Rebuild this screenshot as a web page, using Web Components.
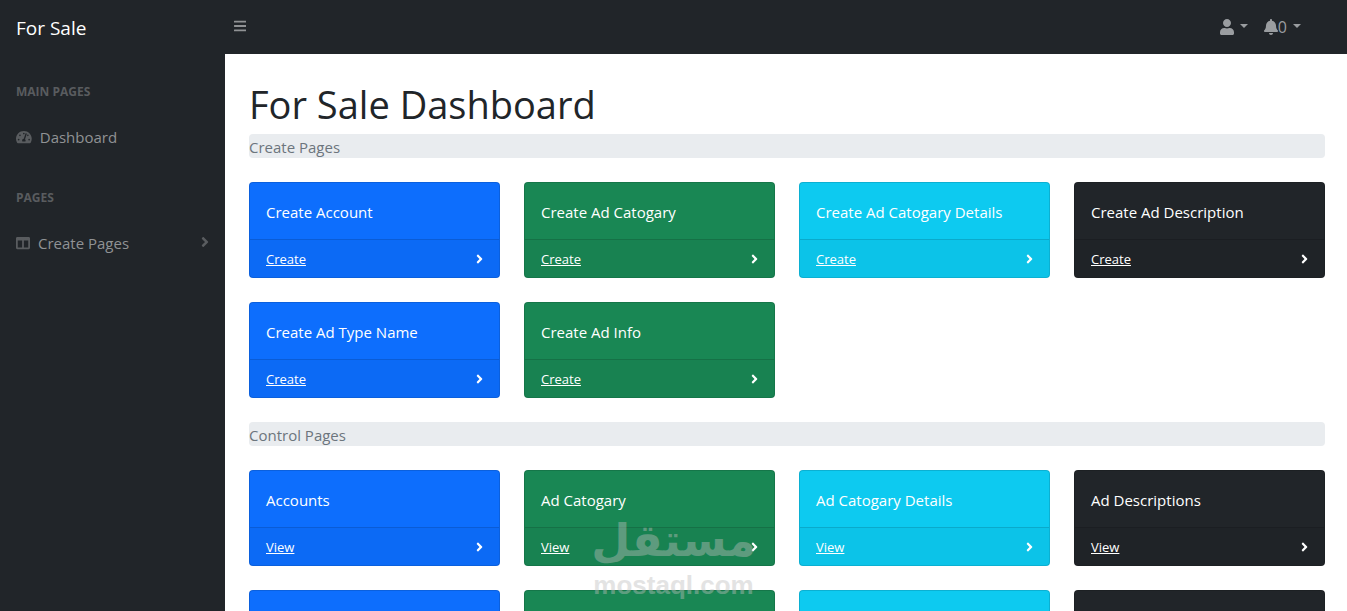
<!DOCTYPE html>
<html lang="en">
<head>
<meta charset="utf-8">
<meta name="viewport" content="width=device-width, initial-scale=1">
<title>For Sale Dashboard</title>
<style>
  body { margin: 0; font: 15px/24px "Open Sans", "Noto Sans", sans-serif; color: #212529; background: #fff; }
</style>
</head>
<body>
<sale-app>
  <top-bar slot="top" brand="For Sale" count="0"></top-bar>
  <side-nav slot="side">
    <nav-group heading="Main Pages"><nav-item icon="gauge">Dashboard</nav-item></nav-group>
    <nav-group heading="Pages"><nav-item icon="columns" expandable>Create Pages</nav-item></nav-group>
  </side-nav>
  <page-title>For Sale Dashboard</page-title>
  <card-section heading="Create Pages">
    <link-card tone="primary" action="Create">Create Account</link-card>
    <link-card tone="success" action="Create">Create Ad Catogary</link-card>
    <link-card tone="info" action="Create">Create Ad Catogary Details</link-card>
    <link-card tone="dark" action="Create">Create Ad Description</link-card>
    <link-card tone="primary" action="Create">Create Ad Type Name</link-card>
    <link-card tone="success" action="Create">Create Ad Info</link-card>
  </card-section>
  <card-section heading="Control Pages">
    <link-card tone="primary" action="View">Accounts</link-card>
    <link-card tone="success" action="View">Ad Catogary</link-card>
    <link-card tone="info" action="View">Ad Catogary Details</link-card>
    <link-card tone="dark" action="View">Ad Descriptions</link-card>
    <link-card tone="primary"></link-card>
    <link-card tone="success"></link-card>
    <link-card tone="info"></link-card>
    <link-card tone="dark"></link-card>
  </card-section>
  <water-mark slot="overlay"></water-mark>
</sale-app>

<script>
const ICONS = {
  bars: [448, "M16 132h416c8.837 0 16-7.163 16-16V76c0-8.837-7.163-16-16-16H16C7.163 60 0 67.163 0 76v40c0 8.837 7.163 16 16 16zm0 160h416c8.837 0 16-7.163 16-16v-40c0-8.837-7.163-16-16-16H16c-8.837 0-16 7.163-16 16v40c0 8.837 7.163 16 16 16zm0 160h416c8.837 0 16-7.163 16-16v-40c0-8.837-7.163-16-16-16H16c-8.837 0-16 7.163-16 16v40c0 8.837 7.163 16 16 16z"],
  user: [448, "M224 256c70.7 0 128-57.3 128-128S294.7 0 224 0 96 57.3 96 128s57.3 128 128 128zm89.6 32h-16.7c-22.2 10.2-46.9 16-72.9 16s-50.6-5.8-72.9-16h-16.7C60.2 288 0 348.2 0 422.4V464c0 26.5 21.5 48 48 48h352c26.5 0 48-21.5 48-48v-41.6c0-74.2-60.2-134.4-134.4-134.4z"],
  bell: [448, "M224 512c35.32 0 63.97-28.65 63.97-64H160.03c0 35.35 28.65 64 63.97 64zm215.39-149.71c-19.32-20.76-55.47-51.99-55.47-154.29 0-77.7-54.48-139.9-127.94-155.16V32c0-17.67-14.32-32-31.98-32s-31.98 14.33-31.98 32v20.84C118.56 68.1 64.08 130.3 64.08 208c0 102.3-36.15 133.53-55.47 154.29-6 6.45-8.66 14.16-8.61 21.71.11 16.4 12.98 32 32.1 32h383.8c19.12 0 32-15.6 32.1-32 .05-7.55-2.61-15.27-8.61-21.71z"],
  columns: [512, "M464 32H48C21.49 32 0 53.49 0 80v352c0 26.51 21.49 48 48 48h416c26.51 0 48-21.49 48-48V80c0-26.51-21.49-48-48-48zM224 416H64V160h160v256zm224 0H288V160h160v256z"],
  gauge: [576, "M288 32C128.94 32 0 160.94 0 320c0 52.8 14.25 102.26 39.06 144.8 5.61 9.62 16.3 15.2 27.44 15.2h443c11.14 0 21.83-5.58 27.44-15.2C561.75 422.26 576 372.8 576 320c0-159.06-128.94-288-288-288zm0 64c14.71 0 26.58 10.13 30.32 23.65-1.11 2.26-2.64 4.23-3.45 6.67l-9.22 27.67c-5.13 3.49-10.97 6.01-17.64 6.01-17.67 0-32-14.33-32-32S270.33 96 288 96zM96 384c-17.67 0-32-14.33-32-32s14.33-32 32-32 32 14.33 32 32-14.33 32-32 32zm48-160c-17.67 0-32-14.33-32-32s14.33-32 32-32 32 14.33 32 32-14.33 32-32 32zm246.77-72.41l-61.33 184C343.13 347.33 352 364.54 352 384c0 11.72-3.38 22.55-8.88 32H232.88c-5.5-9.45-8.88-20.28-8.88-32 0-33.94 26.5-61.43 59.9-63.59l61.34-184.01c4.17-12.56 17.73-19.45 30.36-15.17 12.57 4.19 19.35 17.79 15.17 30.36zm14.66 57.2l15.52-46.55c3.47-1.29 7.13-2.23 11.05-2.23 17.67 0 32 14.33 32 32s-14.33 32-32 32c-11.38-.01-20.89-6.28-26.57-15.22zM480 384c-17.67 0-32-14.33-32-32s14.33-32 32-32 32 14.33 32 32-14.33 32-32 32z"],
  angle: [256, "M224.3 273l-136 136c-9.4 9.4-24.6 9.4-33.9 0l-22.6-22.6c-9.4-9.4-9.4-24.6 0-33.9l96.4-96.4-96.4-96.4c-9.4-9.4-9.4-24.6 0-33.9L54.3 103c9.4-9.4 24.6-9.4 33.9 0l136 136c9.5 9.4 9.5 24.6.1 34z"]
};
const icon = (name, size) => `<svg class="icon" aria-hidden="true" height="${size}" viewBox="0 0 ${ICONS[name][0]} 512" fill="currentColor"><path d="${ICONS[name][1]}"/></svg>`;

function define(name, render) {
  customElements.define(name, class extends HTMLElement {
    constructor() { super(); this.attachShadow({ mode: "open" }); }
    connectedCallback() { this.shadowRoot.innerHTML = render(this); }
  });
}

define("sale-app", () => `
  <style>
    :host { display: grid; grid-template: auto minmax(0, 1fr) / 225px minmax(0, 1fr); height: 100vh; position: relative; overflow: hidden; }
    slot[name=top] { display: block; grid-column: 1 / -1; }
    main { overflow-y: auto; scrollbar-width: none; padding: 24px 22px 24px 24px; }
  </style>
  <slot name="top"></slot>
  <slot name="side"></slot>
  <main><slot></slot></main>
  <slot name="overlay"></slot>`);

define("top-bar", el => `
  <style>
    :host { display: block; background: #212529; }
    header { display: flex; align-items: center; height: 54px; box-sizing: border-box; padding-right: 38px; }
    .brand { width: 226px; box-sizing: border-box; padding: 2px 0 0 16px; font-size: 19px; line-height: 30px; color: #fff; text-decoration: none; }
    button { display: flex; align-items: center; border: 0; background: none; padding: 8px; font: inherit; color: #909294; }
    .menu { padding-bottom: 10px; }
    .icon { display: block; }
    .tools { display: flex; margin-left: auto; color: #9a9da0; font-size: 16px; }
    .tools button { color: inherit; }
    .caret { margin: 0 0 2px 6px; border: 4px solid transparent; border-top-color: currentColor; border-bottom: 0; }
  </style>
  <header>
    <a class="brand" href="#">${el.getAttribute("brand")}</a>
    <button class="menu" aria-label="Toggle navigation">${icon("bars", 14)}</button>
    <div class="tools">
      <button aria-label="Account">${icon("user", 16)}<span class="caret"></span></button>
      <button aria-label="Notifications">${icon("bell", 16)}<span>${el.getAttribute("count")}</span><span class="caret"></span></button>
    </div>
  </header>`);

define("side-nav", () => `
  <style>
    :host { display: block; background: #212529; padding-top: 1px; }
  </style>
  <nav><slot></slot></nav>`);

define("nav-group", el => `
  <style>
    :host { display: block; }
    h2 { margin: 0; padding: 28px 16px 12px; font-size: 12px; line-height: 18px; font-weight: 700; text-transform: uppercase; color: #595c5f; }
  </style>
  <h2>${el.getAttribute("heading")}</h2><slot></slot>`);

define("nav-item", el => `
  <style>
    :host { display: block; }
    a { display: flex; align-items: center; padding: 12px 16px; color: #909294; text-decoration: none; }
    .icon { display: block; margin-right: 8px; color: #595c5f; }
    .more { margin-left: auto; padding-bottom: 2px; }
    .more .icon { margin: 0; }
  </style>
  <a href="#">${icon(el.getAttribute("icon"), 14)}<span><slot></slot></span>${el.hasAttribute("expandable") ? `<span class="more">${icon("angle", 16)}</span>` : ""}</a>`);

define("page-title", () => `
  <style>
    :host { display: block; margin-bottom: 4px; }
    h1 { margin: 0; font-size: 38px; line-height: 52px; font-weight: 400; }
  </style>
  <h1><slot></slot></h1>`);

define("card-section", el => `
  <style>
    :host { display: block; }
    h2 { margin: 0 0 24px; padding-top: 2px; font: inherit; line-height: 22px; color: #6c757d; background: #e9ecef; border-radius: 4px; }
    .grid { display: grid; grid-template-columns: repeat(4, minmax(0, 1fr)); gap: 24px; margin-bottom: 24px; }
  </style>
  <h2>${el.getAttribute("heading")}</h2>
  <div class="grid"><slot></slot></div>`);

define("link-card", el => {
  const tone = { primary: "#0d6efd", success: "#198754", info: "#0dcaf0", dark: "#212529" }[el.getAttribute("tone")];
  const action = el.getAttribute("action");
  return `
  <style>
    :host { display: block; background: ${tone}; color: #fff; border: 1px solid rgba(0,0,0,.125); border-radius: 4px; }
    .body { padding: 17px 16px 15px; min-height: 24px; }
    .foot { display: flex; align-items: center; justify-content: space-between; padding: 8px 16px; min-height: 21px; font-size: 13px; line-height: 19px; border-top: 1px solid rgba(0,0,0,.125); background: rgba(0,0,0,.03); }
    a { padding-top: 2px; color: #fff; }
    .icon { display: block; }
  </style>
  <div class="body"><slot></slot></div>
  <div class="foot">${action ? `<a href="#">${action}</a>${icon("angle", 14)}` : ""}</div>`;
});

define("water-mark", () => `
  <style>
    :host { position: absolute; left: 50%; bottom: 0; margin-left: -80px; width: 160px; display: flex; flex-direction: column; align-items: center; pointer-events: none; color: #bebebe; opacity: .42; white-space: nowrap; }
    .ar { font: 700 45px/56px "DejaVu Sans", sans-serif; }
    .en { font: 700 26px/32px "Liberation Sans", sans-serif; padding-bottom: 10px; }
  </style>
  <span class="ar" lang="ar" dir="rtl">مستقل</span>
  <span class="en">mostaql.com</span>`);
</script>
</body>
</html>
